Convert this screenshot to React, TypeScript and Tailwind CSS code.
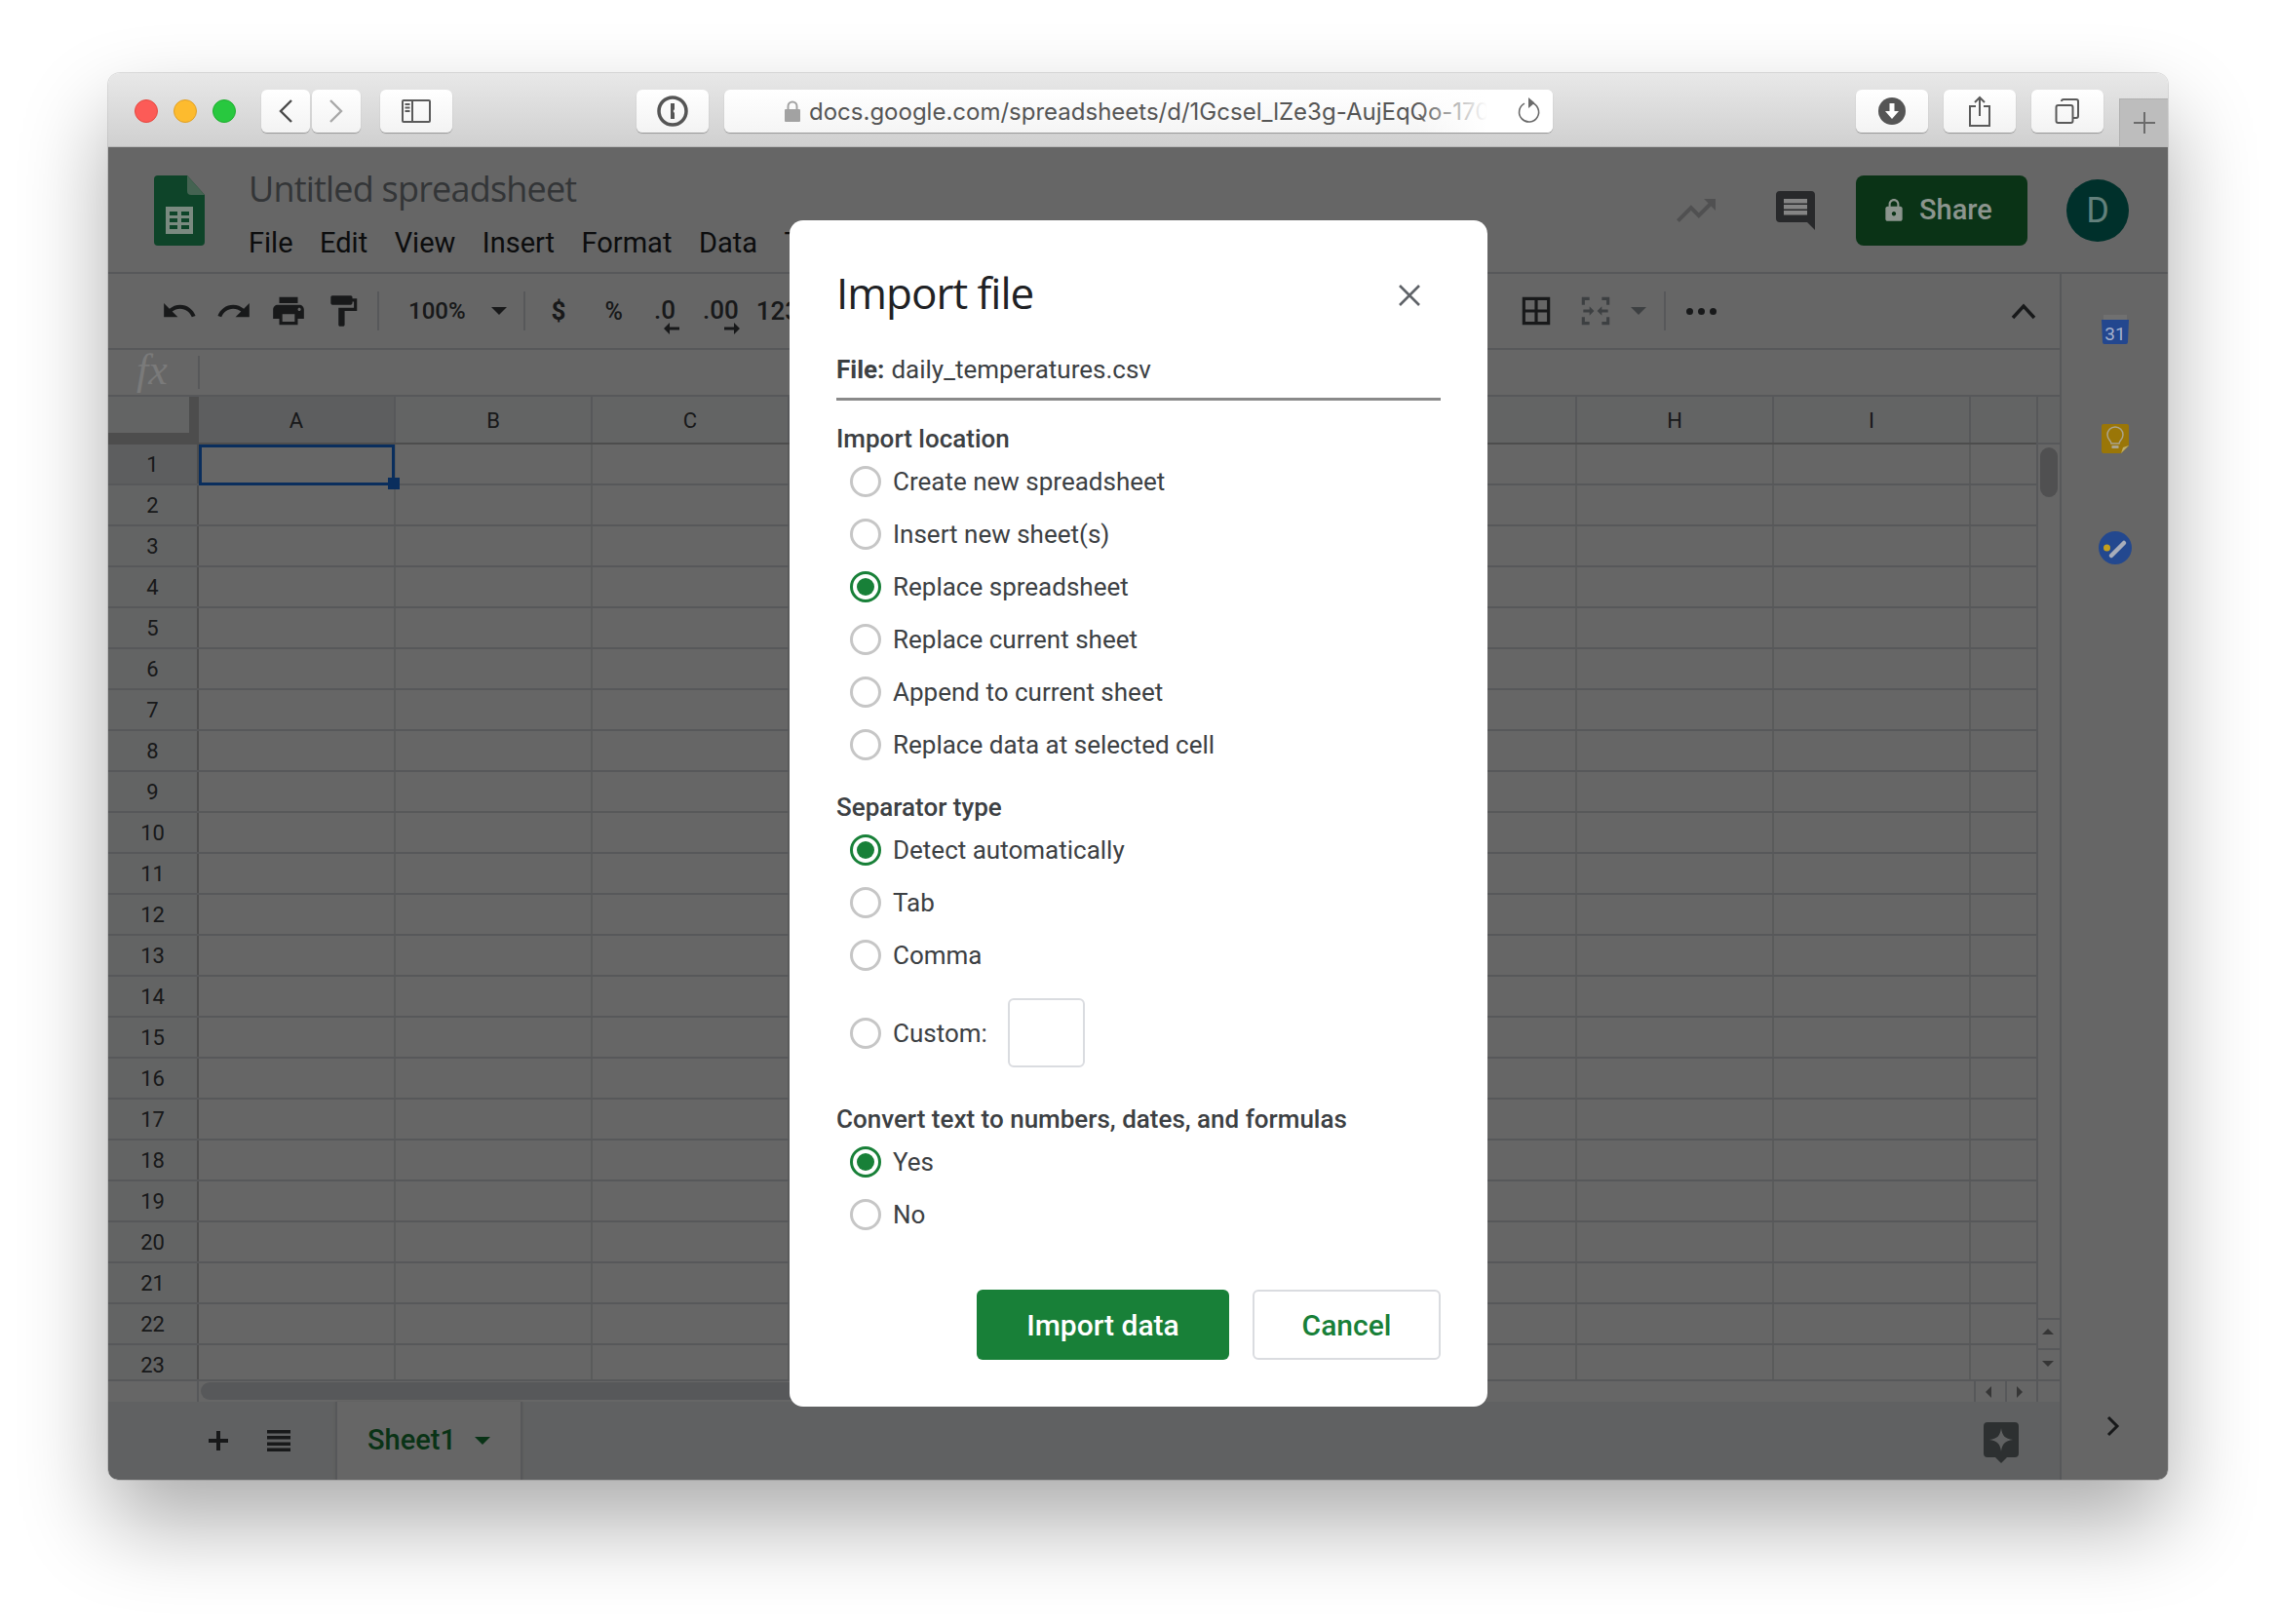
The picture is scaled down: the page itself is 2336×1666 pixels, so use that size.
import React from 'react';

const ROWS = Array.from({ length: 23 }, (_, i) => i + 1);
const COLS = ['A', 'B', 'C', 'D', 'E', 'F', 'G', 'H', 'I'];

const Icon = ({ d, size = 38, className = '' }: { d: string; size?: number; className?: string }) => (
  <svg width={size} height={size} viewBox="0 0 24 24" className={`shrink-0 fill-current ${className}`}>
    <path d={d} />
  </svg>
);

const UNDO = 'M12.5 8c-2.65 0-5.05.99-6.9 2.6L2 7v9h9l-3.62-3.62c1.39-1.16 3.16-1.88 5.12-1.88 3.54 0 6.55 2.31 7.6 5.5l2.37-.78C21.08 11.03 17.15 8 12.5 8z';
const REDO = 'M18.4 10.6C16.55 8.99 14.15 8 11.5 8c-4.65 0-8.58 3.03-9.96 7.22L3.9 16c1.05-3.19 4.05-5.5 7.6-5.5 1.95 0 3.73.72 5.12 1.88L13 16h9V7l-3.6 3.6z';
const PRINT = 'M19 8H5c-1.66 0-3 1.34-3 3v6h4v4h12v-4h4v-6c0-1.66-1.34-3-3-3zm-3 11H8v-5h8v5zm3-7c-.55 0-1-.45-1-1s.45-1 1-1 1 .45 1 1-.45 1-1 1zm-1-9H6v4h12V3z';
const PAINT = 'M18 4V3c0-.55-.45-1-1-1H5c-.55 0-1 .45-1 1v4c0 .55.45 1 1 1h12c.55 0 1-.45 1-1V6h1v4H9v11c0 .55.45 1 1 1h2c.55 0 1-.45 1-1v-9h8V4h-3z';
const TREND = 'M16 6l2.29 2.29-4.88 4.88-4-4L2 16.59 3.41 18l6-6 4 4 6.3-6.29L22 12V6z';
const LOCK = 'M18 8h-1V6c0-2.76-2.24-5-5-5S7 3.24 7 6v2H6c-1.1 0-2 .9-2 2v10c0 1.1.9 2 2 2h12c1.1 0 2-.9 2-2V10c0-1.1-.9-2-2-2zm-6 9c-1.1 0-2-.9-2-2s.9-2 2-2 2 .9 2 2-.9 2-2 2zm3.1-9H8.9V6c0-1.71 1.39-3.1 3.1-3.1 1.71 0 3.1 1.39 3.1 3.1v2z';

const MacButton = ({ w, children }: { w: string; children: React.ReactNode }) => (
  <div className={`${w} h-[44px] flex items-center justify-center rounded-[6px] bg-gradient-to-b from-white to-[#f3f3f3] shadow-[0_1px_1px_rgba(0,0,0,0.3)]`}>
    {children}
  </div>
);

const TitleBar = () => (
  <div className="relative h-[76px] shrink-0 flex items-center pl-[27px] pt-[3px] rounded-t-[12px] bg-gradient-to-b from-[#e8e8e8] to-[#d0d0d0] border-b border-[#b9b9b9] font-['Inter',sans-serif]">
    <div className="flex gap-[16px]">
      <div className="w-[24px] h-[24px] rounded-full bg-[#fc5b57] border border-[#e5483f]" />
      <div className="w-[24px] h-[24px] rounded-full bg-[#fdbb2e] border border-[#e0a026]" />
      <div className="w-[24px] h-[24px] rounded-full bg-[#28c83f] border border-[#1fae2e]" />
    </div>
    <div className="flex gap-[2px] ml-[26px]">
      <MacButton w="w-[50px]">
        <svg width="18" height="26" viewBox="0 0 18 26" className="fill-none stroke-[#4a4a4a] stroke-[2.4]"><path d="M15 2 4 13l11 11" /></svg>
      </MacButton>
      <MacButton w="w-[50px]">
        <svg width="18" height="26" viewBox="0 0 18 26" className="fill-none stroke-[#a8a8a8] stroke-[2.4]"><path d="M3 2l11 11L3 24" /></svg>
      </MacButton>
    </div>
    <div className="ml-[20px]">
      <MacButton w="w-[74px]">
        <svg width="30" height="24" viewBox="0 0 30 24" className="fill-none stroke-[#5a5a5a] stroke-2">
          <rect x="1" y="1" width="28" height="22" rx="1" />
          <path d="M11 1v22" />
          <path d="M3.500 5h5M3.500 8.500h5M3.500 12h5" />
        </svg>
      </MacButton>
    </div>
    <div className="ml-[189px]">
      <MacButton w="w-[74px]">
        <svg width="32" height="32" viewBox="0 0 32 32">
          <circle cx="16" cy="16" r="14" className="fill-none stroke-[#555] stroke-[3.5]" />
          <path d="M14 8h4v6l-1.400 2 1.400 2v6h-4z" className="fill-[#555]" />
        </svg>
      </MacButton>
    </div>
    <div className="relative ml-[16px] w-[850px] h-[44px] flex items-center rounded-[6px] bg-gradient-to-b from-white to-[#f5f5f5] shadow-[0_1px_1px_rgba(0,0,0,0.3)] overflow-hidden">
      <svg width="16" height="22" viewBox="0 0 16 22" className="ml-[62px] shrink-0">
        <path d="M3.500 9V6a4.500 4.500 0 0 1 9 0v3" className="fill-none stroke-[#a2a2a2] stroke-2" />
        <rect x="0" y="9" width="16" height="13" rx="1" className="fill-[#a2a2a2]" />
      </svg>
      <span className="ml-[9px] mt-[2px] text-[24px] leading-none text-[#555] whitespace-nowrap">docs.google.com/spreadsheets/d/1Gcsel_lZe3g-AujEqQo-170l</span>
      <div className="absolute right-[67px] top-0 h-full w-[75px] bg-gradient-to-r from-transparent to-white" />
      <div className="absolute right-0 top-0 h-full w-[67px] flex items-center justify-end pr-[11px] bg-white">
        <svg width="26" height="30" viewBox="0 0 26 30" className="fill-none stroke-[#6a6a6a] stroke-[1.6]">
          <path d="M15 6.300a10 10 0 1 1-7 .8" />
          <path d="M12 1l6.500 5.500L12 12z" className="fill-[#6a6a6a] stroke-none" />
        </svg>
      </div>
    </div>
    <div className="flex gap-[16px] ml-[311px]">
      <MacButton w="w-[74px]">
        <svg width="28" height="28" viewBox="0 0 28 28">
          <circle cx="14" cy="14" r="14" className="fill-[#555]" />
          <path d="M11.500 6h5v8h4.500L14 22l-7-8h4.500z" className="fill-white" />
        </svg>
      </MacButton>
      <MacButton w="w-[74px]">
        <svg width="24" height="32" viewBox="0 0 24 32" className="fill-none stroke-[#5a5a5a] stroke-2">
          <path d="M8 11H2v20h20V11h-6" />
          <path d="M12 21V2M7 7l5-5 5 5" />
        </svg>
      </MacButton>
      <MacButton w="w-[74px]">
        <svg width="26" height="26" viewBox="0 0 26 26" className="fill-none stroke-[#5a5a5a] stroke-2">
          <rect x="1.500" y="7" width="17" height="18" rx="2" />
          <path d="M7 3a2 2 0 0 1 2-2h13a2 2 0 0 1 2 2v15a2 2 0 0 1-2 2h-3" />
        </svg>
      </MacButton>
    </div>
    <div className="absolute right-0 bottom-0 w-[50px] h-[49px] flex items-center justify-center bg-[#bdbdbd] border-l border-t border-[#b0b0b0]">
      <svg width="24" height="24" viewBox="0 0 24 24" className="stroke-[#6b6b6b] stroke-2"><path d="M12 1v22M1 12h22" /></svg>
    </div>
  </div>
);

// colours here are the final, already dimmed ones: the logo sits above the overlay
const SheetsLogo = () => (
  <svg width="52" height="72" viewBox="0 0 52 72" className="relative z-10 shrink-0">
    <path d="M4 0h30l18 20v48a4 4 0 0 1-4 4H4a4 4 0 0 1-4-4V4a4 4 0 0 1 4-4z" className="fill-[#0e4429]" />
    <path d="M34 0l18 20H38a4 4 0 0 1-4-4z" className="fill-[#456352]" />
    <path d="M12 32h28v28H12z" className="fill-[#7a8a80]" />
    <path d="M16 37h8v4h-8zM28 37h8v4h-8zM16 44h8v4h-8zM28 44h8v4h-8zM16 51h8v4h-8zM28 51h8v4h-8z" className="fill-[#0e4429]" />
  </svg>
);

const Header = () => (
  <div className="h-[130px] shrink-0 flex items-start bg-white border-b-2 border-[#dadce0] pt-[29px] pl-[47px]">
    <SheetsLogo />
    <div className="ml-[45px] mt-[-8px] flex flex-col">
      <div className="text-[36px] leading-[44px] text-[#80868b] whitespace-nowrap font-['Open_Sans',sans-serif] tracking-[-0.8px]">Untitled spreadsheet</div>
      <div className="flex gap-[27.5px] mt-[16px] text-[29px] leading-[34px] text-[#202124]">
        <span>File</span>
        <span>Edit</span>
        <span>View</span>
        <span>Insert</span>
        <span>Format</span>
        <span>Data</span>
        <span>Tools</span>
      </div>
    </div>
    <div className="ml-auto mr-[40px] flex items-center h-[72px]">
      <Icon d={TREND} size={48} className="text-[#c8c9ca] mr-[58px]" />
      <svg width="40" height="40" viewBox="0 0 40 40" className="relative z-10 mr-[42px] mt-[-1px]">
        <path d="M4 0h32a4 4 0 0 1 4 4v36l-8-8H4a4 4 0 0 1-4-4V4a4 4 0 0 1 4-4z" className="fill-[#28292b]" />
        <path d="M8 8h24v4.500H8zM8 14h24v4.500H8zM8 20h24v4.500H8z" className="fill-[#858585]" />
      </svg>
      <div className="relative z-10 w-[176px] h-[72px] flex items-center pl-[26px] rounded-[8px] bg-[#0a3316] text-[#8c958e]">
        <Icon d={LOCK} size={26} className="mr-[13px]" />
        <span className="text-[29px] font-medium">Share</span>
      </div>
      <div className="relative z-10 ml-[40px] w-[64px] h-[64px] flex items-center justify-center rounded-full bg-[#00302b] text-[#63807c] text-[36px]">D</div>
    </div>
  </div>
);

const Separator = ({ className = '' }: { className?: string }) => <div className={`w-[2px] h-[40px] bg-[#dadce0] ${className}`} />;

const Caret = ({ className = '' }: { className?: string }) => (
  <svg width="16" height="8" viewBox="0 0 16 8" className={`fill-current ${className}`}><path d="M0 0h16L8 8z" /></svg>
);

const DecimalIcon = ({ label, dir }: { label: string; dir: 'l' | 'r' }) => (
  <div className="relative h-[38px] pt-[3px] flex items-start justify-center">
    <span className="text-[26px] leading-[30px] text-[#3c4043] font-medium">{label}</span>
    <svg width="16" height="12" viewBox="0 0 16 12" className={`absolute top-[31px] fill-[#3c4043] ${dir === 'l' ? 'left-[10px]' : 'right-[-1px]'}`}>
      <path d={dir === 'l' ? 'M0 6l6-6v4.500h10v3H6V12z' : 'M16 6l-6-6v4.500H0v3h10V12z'} />
    </svg>
  </div>
);

const Toolbar = () => (
  <div className="h-[78px] shrink-0 flex items-center border-b-2 border-[#dadce0] pl-[54px] text-[#3c4043]">
    <div className="flex items-center gap-[18px]"><Icon d={UNDO} /><Icon d={REDO} /><Icon d={PRINT} /><Icon d={PAINT} /></div>
    <Separator className="ml-[16px]" />
    <span className="ml-[30px] text-[24px] font-medium leading-none">100%</span>
    <Caret className="ml-[26px]" />
    <Separator className="ml-[17px]" />
    <span className="ml-[27px] text-[26px] font-bold leading-none">$</span>
    <span className="ml-[40px] text-[25px] font-medium leading-none">%</span>
    <div className="ml-[32px]"><DecimalIcon label=".0" dir="l" /></div>
    <div className="ml-[28px]"><DecimalIcon label=".00" dir="r" /></div>
    <span className="ml-[18px] text-[26px] font-medium leading-none">123</span>
    <div className="ml-auto flex items-center">
      <svg width="38" height="38" viewBox="0 0 24 24" className="fill-[#3c4043]">
        <path d="M3 3h18v18H3zm2 2v6h6V5zm8 0v6h6V5zM5 13v6h6v-6zm8 0v6h6v-6z" />
      </svg>
      <svg width="38" height="38" viewBox="0 0 24 24" className="ml-[23px] fill-[#9aa0a6]">
        <path d="M3 3h5v2H5v3H3zM16 3h5v5h-2V5h-3zM3 16h2v3h3v2H3zM19 16h2v5h-5v-2h3zM4 11h4V9l3 3-3 3v-2H4zM20 11h-4V9l-3 3 3 3v-2h4z" />
      </svg>
      <Caret className="ml-[17px] text-[#9aa0a6]" />
      <Separator className="ml-[18px]" />
      <div className="ml-[21px] flex gap-[5px]">
        <div className="w-[7px] h-[7px] rounded-full bg-[#3c4043]" />
        <div className="w-[7px] h-[7px] rounded-full bg-[#3c4043]" />
        <div className="w-[7px] h-[7px] rounded-full bg-[#3c4043]" />
      </div>
      <svg width="26" height="18" viewBox="0 0 26 18" className="ml-[302px] mr-[24px] fill-none stroke-[#3c4043] stroke-[3.5]"><path d="M2 16 13 4l11 12" /></svg>
    </div>
  </div>
);

const FormulaBar = () => (
  <div className="h-[48px] shrink-0 flex items-center border-b-2 border-[#dadce0]">
    <span className="relative z-10 ml-[29px] mb-[4px] w-[63px] text-[#7a7a7a] text-[44px] italic leading-none font-['Liberation_Serif',serif]">fx</span>
    <div className="w-[2px] h-[34px] bg-[#dadce0]" />
  </div>
);

const Grid = () => (
  <div className="flex-1 overflow-hidden flex flex-col">
    <div className="h-[49px] shrink-0 flex bg-[#f8f9fa] border-b-2 border-[#c0c0c0]">
      <div className="w-[93px] shrink-0 h-[47px] bg-[#f8f9fa] border-r-[10px] border-b-[10px] border-[#c0c0c0]" />
      {COLS.map((col, i) => (
        <div key={col} className={`w-[202px] shrink-0 pt-[1px] flex items-center justify-center border-r-2 border-[#dadce0] text-[22px] text-[#3c4043] ${i === 0 ? 'bg-[#e8eaed]' : ''}`}>{col}</div>
      ))}
      <div className="flex-1" />
    </div>
    <div className="relative flex-1 overflow-hidden">
      {ROWS.map(row => (
        <div key={row} className="h-[42px] flex border-b-2 border-[#dadce0]">
          <div className={`w-[93px] shrink-0 pt-[1px] flex items-center justify-center border-r-2 border-[#c0c0c0] text-[22px] text-[#3c4043] ${row === 1 ? 'bg-[#e8eaed]' : 'bg-[#f8f9fa]'}`}>{row}</div>
          {COLS.map(col => <div key={col} className="w-[202px] shrink-0 border-r-2 border-[#e2e3e3]" />)}
        </div>
      ))}
      <div className="absolute left-[93px] top-0 w-[201px] h-[42px] border-[3px] border-[#1a73e8]" />
      <div className="absolute left-[287px] top-[34px] w-[12px] h-[12px] bg-[#1a73e8]" />
    </div>
  </div>
);

const ScrollCell = ({ children, className = '' }: { children?: React.ReactNode; className?: string }) => (
  <div className={`flex items-center justify-center ${className}`}>{children}</div>
);

const VScroll = () => (
  <div className="absolute right-0 top-0 bottom-0 w-[24px] flex flex-col bg-white border-l-2 border-[#dadce0]">
    <div className="h-[49px] shrink-0 border-b-2 border-[#dadce0] bg-[#f8f9fa]" />
    <div className="flex-1 px-[2px] pt-[3px]"><div className="h-[51px] rounded-full bg-[#c8c9cb]" /></div>
    <ScrollCell className="h-[31px] pb-[5px] pr-[2px] border-t-2 border-[#dadce0]"><svg width="12" height="6" viewBox="0 0 12 6" className="fill-[#888]"><path d="M6 0l6 6H0z" /></svg></ScrollCell>
    <ScrollCell className="h-[32px] pb-[2px] pr-[2px] border-t-2 border-[#dadce0]"><svg width="12" height="6" viewBox="0 0 12 6" className="fill-[#888]"><path d="M6 6l6-6H0z" /></svg></ScrollCell>
  </div>
);

const HScroll = () => (
  <div className="h-[23px] shrink-0 flex bg-white border-t-2 border-[#dadce0]">
    <div className="w-[93px] shrink-0 border-r-2 border-[#dadce0]" />
    <div className="flex-1 pl-[2px] pr-[60px] pt-[1px]"><div className="w-[800px] h-[18px] rounded-full bg-[#dadce0]" /></div>
    <ScrollCell className="w-[32px] pr-[5px] border-l-2 border-[#dadce0]"><svg width="6" height="12" viewBox="0 0 6 12" className="fill-[#888]"><path d="M0 6l6-6v12z" /></svg></ScrollCell>
    <ScrollCell className="w-[32px] pr-[5px] border-l-2 border-[#dadce0]"><svg width="6" height="12" viewBox="0 0 6 12" className="fill-[#888]"><path d="M6 6L0 0v12z" /></svg></ScrollCell>
    <div className="w-[24px] border-l-2 border-[#dadce0]" />
  </div>
);

const TabBar = () => (
  <div className="h-[80px] shrink-0 flex items-center bg-[#f1f3f4] relative">
    <svg width="24" height="24" viewBox="0 0 24 24" className="ml-[101px] fill-[#3c4043]"><path d="M10 2h4v8h8v4h-8v8h-4v-8H2v-4h8z" /></svg>
    <svg width="26" height="24" viewBox="0 0 26 24" className="ml-[37px] fill-[#3c4043]"><path d="M1 1h24v3.500H1zM1 7h24v3.500H1zM1 13.500h24V17H1zM1 19.500h24V23H1z" /></svg>
    <div className="ml-[45px] w-[192px] h-[80px] flex items-center pl-[31px] bg-white border-x-2 border-[#dadce0] shadow-[0_0_3px_rgba(0,0,0,0.1)]">
      <span className="text-[29px] font-medium text-[#188038]">Sheet1</span>
      <Caret className="ml-[19px] text-[#188038]" />
    </div>
    <svg width="36" height="44" viewBox="0 0 36 44" className="absolute left-[1924px] top-[21px]">
      <path d="M4 0h28a4 4 0 0 1 4 4v28a4 4 0 0 1-4 4h-8l-6 6-6-6H4a4 4 0 0 1-4-4V4a4 4 0 0 1 4-4z" className="fill-[#70797a]" />
      <path d="M18 6c1 8 4 11 12 12-8 1-11 4-12 12-1-8-4-11-12-12 8-1 11-4 12-12z" className="fill-[#f1f3f4]" />
    </svg>
  </div>
);

// the three add-on icons also carry final colours and sit above the overlay
const Sidebar = () => (
  <div className="w-[111px] shrink-0 flex flex-col items-center bg-white border-l-2 border-[#dadce0] relative">
    <svg width="28" height="30" viewBox="0 0 28 30" className="relative z-10 mt-[42px]">
      <path d="M2 0h24v8H2z" className="fill-[#707070]" />
      <path d="M0 5h28l-1 23a2 2 0 0 1-2 2H3a2 2 0 0 1-2-2z" className="fill-[#23478f]" />
      <text x="14" y="26" textAnchor="middle" className="fill-[#a3b0cc] text-[19px]" fontFamily="Roboto">31</text>
    </svg>
    <svg width="28" height="30" viewBox="0 0 28 30" className="relative z-10 mt-[82px]">
      <path d="M2 0h24a2 2 0 0 1 2 2v20l-8 8H2a2 2 0 0 1-2-2V2a2 2 0 0 1 2-2z" className="fill-[#9a7607]" />
      <path d="M20 30l2-6 6-2z" className="fill-[#c0ae66]" />
      <path d="M10 20c0-3-4-4-4-9a8 8 0 0 1 16 0c0 5-4 6-4 9z" className="fill-none stroke-[#aaa48e] stroke-[1.5]" />
      <path d="M10.500 22h7v3h-7z" className="fill-[#aaa48e]" />
    </svg>
    <svg width="34" height="34" viewBox="0 0 34 34" className="relative z-10 mt-[80px]">
      <circle cx="17" cy="17" r="17" className="fill-[#23488f]" />
      <circle cx="8.500" cy="17" r="3.500" className="fill-[#c59f1d]" />
      <path d="M13 25 26 12" className="fill-none stroke-[#a8adba] stroke-[4.5]" strokeLinecap="round" />
    </svg>
    <svg width="14" height="22" viewBox="0 0 14 22" className="absolute left-[46px] bottom-[44px] fill-none stroke-[#3c4043] stroke-[3]"><path d="M2 2l9 9-9 9" /></svg>
  </div>
);

const Radio = ({ label, checked = false, children }: { label: string; checked?: boolean; children?: React.ReactNode }) => (
  <div className="flex items-center h-[54px] pl-[14px]">
    <div className={`w-[32px] h-[32px] shrink-0 flex items-center justify-center rounded-full border-[3px] ${checked ? 'border-[#188038]' : 'border-[#c6c6c6]'}`}>
      {checked && <div className="w-[18px] h-[18px] rounded-full bg-[#188038]" />}
    </div>
    <span className="ml-[12px] text-[26px] text-[#3c4043] whitespace-nowrap">{label}</span>
    {children}
  </div>
);

const SectionLabel = ({ children, className = '' }: { children: React.ReactNode; className?: string }) => (
  <div className={`text-[26px] leading-[32px] font-medium text-[#3c4043] ${className}`}>{children}</div>
);

const ImportDialog = () => (
  <div className="absolute z-20 left-[699px] top-[75px] w-[716px] h-[1217px] flex flex-col px-[48px] pt-[46px] rounded-[14px] bg-white">
    <div className="flex items-center justify-between h-[56px]">
      <h1 className="text-[44px] leading-[56px] text-[#202124] font-['Open_Sans',sans-serif] tracking-[-1px]">Import file</h1>
      <svg width="24" height="24" viewBox="0 0 24 24" className="mr-[20px] mt-[6px] stroke-[#5f6368] stroke-[2.6]"><path d="M2 2l20 20M22 2L2 22" /></svg>
    </div>
    <div className="mt-[28px] h-[55px] flex items-center border-b-[3px] border-[#8a8a8a] text-[26px] text-[#3c4043] pb-[6px]">
      <span className="font-bold">File:</span>
      <span className="ml-[7px]">daily_temperatures.csv</span>
    </div>
    <SectionLabel className="mt-[23px]">Import location</SectionLabel>
    <div className="mt-[1px] flex flex-col">
      <Radio label="Create new spreadsheet" />
      <Radio label="Insert new sheet(s)" />
      <Radio label="Replace spreadsheet" checked />
      <Radio label="Replace current sheet" />
      <Radio label="Append to current sheet" />
      <Radio label="Replace data at selected cell" />
    </div>
    <SectionLabel className="mt-[21px]">Separator type</SectionLabel>
    <div className="mt-[1px] flex flex-col">
      <Radio label="Detect automatically" checked />
      <Radio label="Tab" />
      <Radio label="Comma" />
      <div className="mt-[26px]">
        <Radio label="Custom:">
          <div className="ml-[21px] mt-[-2px] w-[79px] h-[71px] rounded-[6px] border-2 border-[#dadce0]" />
        </Radio>
      </div>
    </div>
    <SectionLabel className="mt-[45px]">Convert text to numbers, dates, and formulas</SectionLabel>
    <div className="mt-[1px] flex flex-col">
      <Radio label="Yes" checked />
      <Radio label="No" />
    </div>
    <div className="mt-[50px] flex justify-end gap-[24px]">
      <button className="w-[259px] h-[72px] rounded-[6px] bg-[#188038] text-white text-[30px] font-medium">Import data</button>
      <button className="w-[193px] h-[72px] rounded-[6px] bg-white border-2 border-[#dadce0] text-[#188038] text-[30px] font-medium">Cancel</button>
    </div>
  </div>
);

export default function App() {
  return (
    <div className="w-[2336px] h-[1666px] pt-[75px] pl-[111px] bg-white overflow-hidden font-['Roboto',sans-serif]">
      <div className="w-[2113px] h-[1443px] flex flex-col rounded-[12px] shadow-[0_44px_90px_rgba(0,0,0,0.33),0_0_0_1px_rgba(0,0,0,0.12)]">
        <TitleBar />
        <div className="relative flex-1 flex flex-col rounded-b-[10px] overflow-hidden bg-white">
          <Header />
          <div className="flex-1 flex min-h-0">
            <div className="flex-1 flex flex-col min-w-0">
              <Toolbar />
              <FormulaBar />
              <div className="relative flex-1 flex flex-col min-h-0">
                <Grid />
                <VScroll />
              </div>
              <HScroll />
              <TabBar />
            </div>
            <Sidebar />
          </div>
          <div className="absolute inset-0 bg-black/60" />
          <ImportDialog />
        </div>
      </div>
    </div>
  );
}
